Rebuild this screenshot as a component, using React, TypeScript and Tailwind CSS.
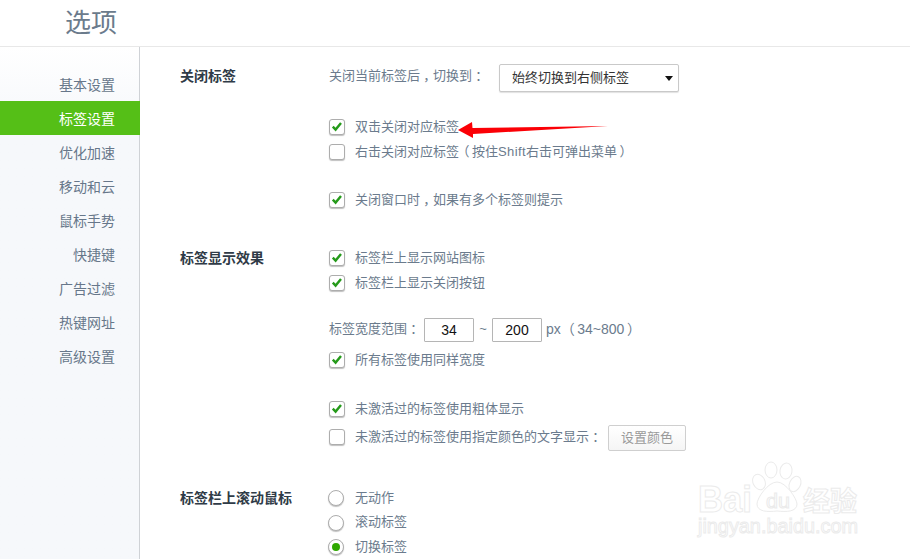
import type { ReactNode } from 'react';

const cjk = { fontFamily: '"Liberation Sans", "Noto Sans CJK SC", sans-serif' };

const navItems = ['基本设置', '标签设置', '优化加速', '移动和云', '鼠标手势', '快捷键', '广告过滤', '热键网址', '高级设置'];

// full width marks sit in the middle of their box in the reference, halt gives the half width glyph
const Mid = ({ children }: { children: string }) => <span className="mx-[3.25px] inline-block [font-feature-settings:'halt']">{children}</span>;
const Open = () => <span className="ml-[4px] mr-[2.5px] inline-block [font-feature-settings:'halt']">（</span>;
const Close = () => <span className="ml-[2.5px] mr-[4px] inline-block [font-feature-settings:'halt']">）</span>;

function Checkbox({ checked }: { checked?: boolean }) {
  return (
    <span className="flex h-4 w-4 shrink-0 -translate-y-px items-center justify-center rounded-[3px] border border-[#adadad] bg-white shadow-[0_1px_1px_rgba(0,0,0,0.25)]">
      {checked && (
        <svg width="12" height="11" viewBox="0 0 12 11">
          <path d="M1.8 5.6 L4.6 8.6 L10 2" fill="none" stroke="#259a1a" strokeWidth="2.4" />
        </svg>
      )}
    </span>
  );
}

function CheckRow({ label, checked, className = '' }: { label: ReactNode; checked?: boolean; className?: string }) {
  return (
    <div className={`flex h-[25px] items-center gap-[10px] whitespace-nowrap ${className}`}>
      <Checkbox checked={checked} />
      <span className="pb-[2px]">{label}</span>
    </div>
  );
}

function RadioRow({ label, checked }: { label: string; checked?: boolean }) {
  return (
    <div className="-ml-px flex h-[24.5px] items-center gap-[11px]">
      <span className="flex h-4 w-4 items-center justify-center rounded-full border border-[#adadad] bg-white shadow-[0_1px_1px_rgba(0,0,0,0.25)]">
        {checked && <span className="h-2 w-2 rounded-full bg-[#2fa800]" />}
      </span>
      <span className="pb-[2px]">{label}</span>
    </div>
  );
}

function SectionTitle({ children }: { children: string }) {
  return <div className="text-[14px] leading-[25px] font-bold text-[#2f3b47]">{children}</div>;
}

function Watermark() {
  const outline = { fill: '#fff', stroke: '#ebebeb', strokeWidth: 1 };
  return (
    <svg className="absolute left-[690px] top-[455px]" width="180" height="90" viewBox="0 0 180 90">
      <text x="8" y="57" fontSize="37" fontWeight="700" fontFamily="Liberation Sans" textLength="54" lengthAdjust="spacingAndGlyphs" {...outline}>Bai</text>
      <ellipse cx="69" cy="27" rx="6" ry="8" transform="rotate(-25 69 27)" {...outline} />
      <ellipse cx="81" cy="15" rx="6" ry="8" {...outline} />
      <ellipse cx="96" cy="16" rx="6" ry="8" transform="rotate(10 96 16)" {...outline} />
      <ellipse cx="105" cy="29" rx="5.5" ry="8" transform="rotate(25 105 29)" {...outline} />
      <path d="M87 27 C96 27 107 44 107 49 C107 57 96 57 87 56 C78 57 67 57 67 49 C67 43 78 27 87 27 Z" {...outline} />
      <text x="76" y="53" fontSize="20" fontFamily="Liberation Sans" textLength="24" lengthAdjust="spacingAndGlyphs" {...outline}>du</text>
      <text x="113" y="56" fontSize="27" fontWeight="700" fontFamily="Noto Sans CJK SC" {...outline}>经验</text>
      <text x="8" y="78" fontSize="21" fontFamily="Liberation Sans" textLength="160" lengthAdjust="spacingAndGlyphs" {...outline}>jingyan.baidu.com</text>
    </svg>
  );
}

export default function App() {
  return (
    <div className="relative h-[559px] w-[910px] overflow-hidden bg-white" style={cjk}>
      <header className="h-[47px] border-b border-[#e8e8e8] pl-[65px] text-[26px] leading-[46px] text-[#6b7b8c]">选项</header>
      <div className="flex h-[512px]">
        <nav className="w-[140px] shrink-0 border-r border-[#cfd2d6] bg-gradient-to-b from-white to-[#f6f8fb] to-[15%] pt-[20px] text-[14px]">
          {navItems.map((item, i) => (
            <div
              key={item}
              className={`h-[34px] w-[140px] pr-[25px] pt-px text-right leading-[34px] ${i === 1 ? 'bg-[#55bf17] text-white' : 'text-[#67778a]'}`}
            >
              {item}
            </div>
          ))}
        </nav>
        <main className="flex-1 pl-[40px] text-[13px] text-[#6b7b8d]">
          <section className="grid grid-cols-[149px_1fr] pt-[17px]">
            <SectionTitle>关闭标签</SectionTitle>
            <div>
              <div className="flex h-[28px] items-center">
                <span className="w-[170px] -translate-y-0.5">关闭当前标签后<Mid>，</Mid>切换到<Mid>：</Mid></span>
                <div className="flex h-[28px] w-[180px] items-center justify-between rounded-[2px] border border-[#c9c9c9] bg-white pl-[12px] pr-[5px] text-[#333] shadow-[0_1px_1px_rgba(0,0,0,0.12)]">
                  <span>始终切换到右侧标签</span>
                  <svg width="8" height="5" viewBox="0 0 8 5"><path d="M0 0 H8 L4 5 Z" fill="#111" /></svg>
                </div>
              </div>
              <div className="relative mt-[23px]">
                <CheckRow label="双击关闭对应标签" checked />
                <svg className="absolute left-[125px] top-[5px]" width="160" height="20" viewBox="0 0 160 20">
                  <path d="M4 10 L18 2 L18.5 8 L154 6 L19 14 L19 18 Z" fill="#fb0006" />
                </svg>
              </div>
              <CheckRow label={<>右击关闭对应标签<Open />按住<span className="tracking-[0.4px]">Shift</span>右击可弹出菜单<Close /></>} />
              <CheckRow label={<>关闭窗口时<Mid>，</Mid>如果有多个标签则提示</>} checked className="mt-[23px]" />
            </div>
          </section>

          <section className="mt-[33px] grid grid-cols-[149px_1fr]">
            <SectionTitle>标签显示效果</SectionTitle>
            <div>
              <CheckRow label="标签栏上显示网站图标" checked />
              <CheckRow label="标签栏上显示关闭按钮" checked />
              <div className="mt-[22px] flex h-[24px] items-center whitespace-nowrap">
                <span className="w-[95px] pb-[2px]">标签宽度范围<Mid>：</Mid></span>
                <span className="flex h-[24px] w-[50px] items-center justify-center rounded-[1px] border border-[#b5b5b5] text-[14px] text-[#111]">34</span>
                <span className="w-[18px] pb-[2px] text-center">~</span>
                <span className="flex h-[24px] w-[50px] items-center justify-center rounded-[1px] border border-[#b5b5b5] text-[14px] text-[#111]">200</span>
                <span className="ml-[4px] pb-[2px] text-[14px]">px<span className="ml-[3px]" /><Open />34~800<Close /></span>
              </div>
              <CheckRow label="所有标签使用同样宽度" checked className="mt-[6px]" />
              <CheckRow label="未激活过的标签使用粗体显示" checked className="mt-[24px]" />
              <div className="mt-[3px] flex h-[26px] items-center gap-[10px] whitespace-nowrap">
                <Checkbox />
                <span className="w-[243px] pb-[2px]">未激活过的标签使用指定颜色的文字显示<Mid>：</Mid></span>
                <span className="flex h-[26px] w-[78px] items-center justify-center rounded-[2px] border border-[#cfcfcf] bg-gradient-to-b from-white to-[#f5f5f5] text-[#9a9a9a]">设置颜色</span>
              </div>
            </div>
          </section>

          <section className="mt-[35px] grid grid-cols-[149px_1fr]">
            <SectionTitle>标签栏上滚动鼠标</SectionTitle>
            <div>
              <RadioRow label="无动作" />
              <RadioRow label="滚动标签" />
              <RadioRow label="切换标签" checked />
            </div>
          </section>
        </main>
      </div>
      <Watermark />
    </div>
  );
}
